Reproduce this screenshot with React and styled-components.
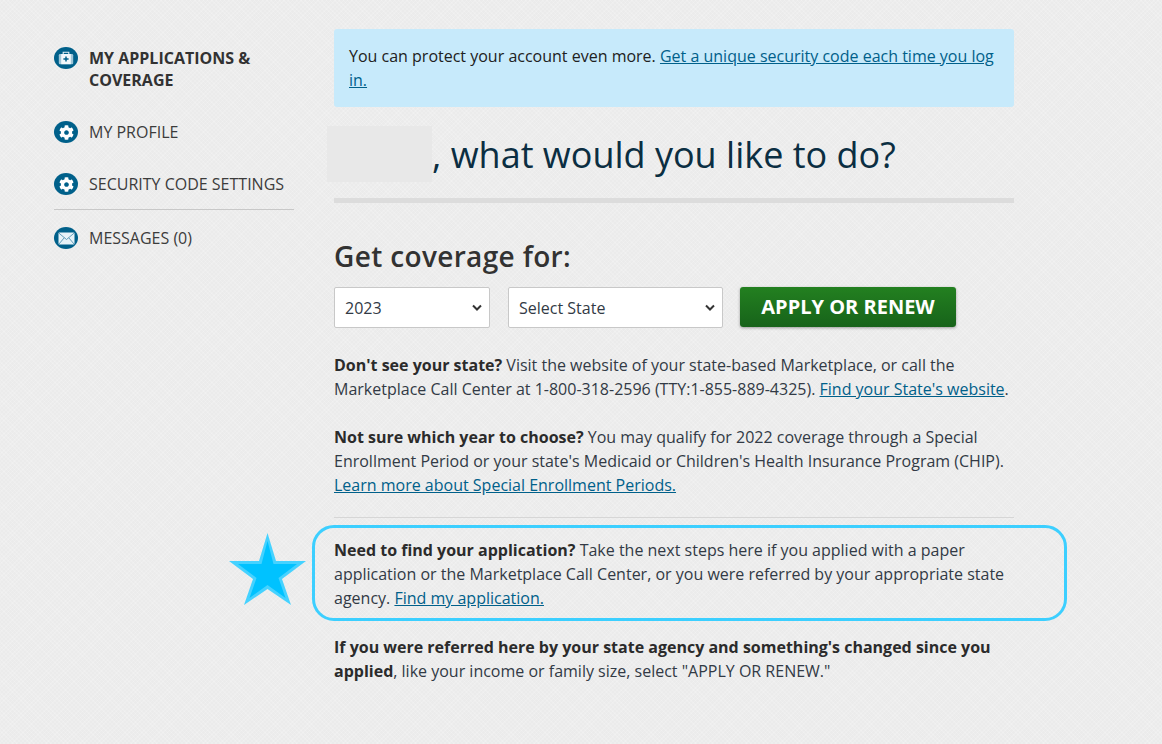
import styled, { createGlobalStyle } from "styled-components";
import { FaCog } from "react-icons/fa";

const GlobalStyle = createGlobalStyle`
  html, body {
    margin: 0;
    padding: 0;
  }
  body {
    font-family: "Open Sans", "Liberation Sans", sans-serif;
    font-size: 16px;
    line-height: 24px;
    color: #323a45;
    background-color: #ebebeb;
    background-image:
      repeating-linear-gradient(45deg, rgba(255, 255, 255, 0.16) 0 1px, transparent 1px 3px),
      repeating-linear-gradient(-45deg, rgba(255, 255, 255, 0.16) 0 1px, transparent 1px 3px);
  }
`;

const BriefcaseIcon = () => (
  <svg width="16" height="14" viewBox="0 0 16 14" fill="none">
    <path d="M5.2 3V1.200h5.600V3" stroke="#e4f1f7" strokeWidth="1.100" />
    <rect x="0.800" y="3" width="14.400" height="10.200" rx="1.200" fill="#9fc6d8" />
    <rect x="3.200" y="3" width="9.600" height="10.200" fill="#f2f8fb" />
    <path d="M8 5.400v5.200M5.400 8h5.200" stroke="#00608a" strokeWidth="1.500" />
  </svg>
);

const EnvelopeIcon = () => (
  <svg width="17" height="13" viewBox="0 0 17 13">
    <rect x="0.500" y="0.500" width="16" height="12" rx="1" fill="#e6f2f8" />
    <path d="M1 1.200L8.500 7.500 16 1.200M1 12l5.200-6.200M16 12l-5.200-6.200" fill="none" stroke="#3f87a8" strokeWidth="0.800" />
  </svg>
);

const navItems = [
  { label: "MY APPLICATIONS & COVERAGE", icon: <BriefcaseIcon />, active: true },
  { label: "MY PROFILE", icon: <FaCog size={15} color="#fff" /> },
  { label: "SECURITY CODE SETTINGS", icon: <FaCog size={15} color="#fff" />, divided: true },
  { label: "MESSAGES (0)", icon: <EnvelopeIcon /> },
];

export default function App() {
  return (
    <>
      <GlobalStyle />
      <Page>
        <Sidebar>
          {navItems.map((item) => (
            <NavItem key={item.label} $divided={item.divided}>
              <IconCircle>{item.icon}</IconCircle>
              <NavLabel $active={item.active}>{item.label}</NavLabel>
            </NavItem>
          ))}
        </Sidebar>

        <Main>
          <Alert>
            You can protect your account even more.{" "}
            <AlertLink href="#">Get a unique security code each time you log in.</AlertLink>
          </Alert>

          <Heading>
            <Redacted />
            <HeadingText>, what would you like to do?</HeadingText>
          </Heading>

          <Subheading>Get coverage for:</Subheading>
          <Controls>
            <Select $width={156} defaultValue="2023">
              <option>2023</option>
              <option>2022</option>
            </Select>
            <Select $width={215} defaultValue="Select State">
              <option>Select State</option>
            </Select>
            <ApplyButton>APPLY OR RENEW</ApplyButton>
          </Controls>

          <Paragraph>
            <strong>Don't see your state?</strong> Visit the website of your state-based Marketplace, or call the
            Marketplace Call Center at 1-800-318-2596 (TTY:1-855-889-4325).{" "}
            <TextLink href="#">Find your State's website</TextLink>.
          </Paragraph>

          <Paragraph>
            <strong>Not sure which year to choose?</strong> You may qualify for 2022 coverage through a Special
            Enrollment Period or your state's Medicaid or Children's Health Insurance Program (CHIP).{" "}
            <TextLink href="#">Learn more about Special Enrollment Periods.</TextLink>
          </Paragraph>

          <Divider />

          <Callout>
            <Star viewBox="0 0 77 72">
              <path d="M38.500 0L47 28h30L53 46l9 26-23.500-16L15 72l9-26L0 28h30z" fill="#45d2ff" />
              <path d="M38.500 8l6 23H68L49.500 45l7 20-18-13-18 13 7-20L9 31h23.500z" fill="#00c2ff" />
            </Star>
            <Ring />
            <Paragraph>
              <strong>Need to find your application?</strong> Take the next steps here if you applied with a paper
              application or the Marketplace Call Center, or you were referred by your appropriate state agency.{" "}
              <TextLink href="#">Find my application.</TextLink>
            </Paragraph>
          </Callout>

          <Paragraph>
            <strong>If you were referred here by your state agency and something's changed since you applied</strong>,
            like your income or family size, select "APPLY OR RENEW."
          </Paragraph>
        </Main>
      </Page>
    </>
  );
}

const Page = styled.div`
  display: flex;
  gap: 40px;
  padding: 29px 0 0 54px;
  height: 715px;
  overflow: hidden;
`;

const Sidebar = styled.nav`
  width: 240px;
  flex: none;
  padding-top: 18px;
`;

const NavItem = styled.div`
  display: flex;
  gap: 11px;
  align-items: flex-start;
  margin-bottom: ${(p) => (p.$divided ? "17px" : "30px")};
  padding-bottom: ${(p) => (p.$divided ? "14px" : "0")};
  border-bottom: ${(p) => (p.$divided ? "1px solid #c8c8c8" : "none")};
`;

const IconCircle = styled.span`
  flex: none;
  width: 24px;
  height: 22px;
  border-radius: 50%;
  background: #00608a;
  display: flex;
  align-items: center;
  justify-content: center;
`;

const NavLabel = styled.span`
  font-size: 16px;
  line-height: 22px;
  font-weight: ${(p) => (p.$active ? 700 : 400)};
  color: ${(p) => (p.$active ? "#323232" : "#3c3c3c")};
`;

const Main = styled.main`
  width: 680px;
  flex: none;
`;

const Alert = styled.div`
  background: #c7eafb;
  border-radius: 3px;
  padding: 15px;
  height: 78px;
  box-sizing: border-box;
  color: #212121;
`;

const AlertLink = styled.a`
  color: #00608a;
`;

const Heading = styled.h1`
  display: flex;
  align-items: center;
  margin: 19px 0 0;
  height: 56px;
  font-size: 36px;
  line-height: 56px;
  font-weight: 400;
  color: #0b2e42;
  white-space: pre-wrap;
`;

const HeadingText = styled.span`
  padding-top: 2px;
`;

const Redacted = styled.span`
  display: block;
  width: 105px;
  height: 56px;
  margin-left: -7px;
  background: #e8e8e8;
`;

const Subheading = styled.h2`
  margin: 16px 0 0;
  padding-top: 35px;
  border-top: 5px solid #dcdcdc;
  font-size: 28px;
  line-height: 36px;
  font-weight: 600;
  letter-spacing: 0.35px;
  color: #323232;
`;

const Controls = styled.div`
  display: flex;
  align-items: flex-start;
  gap: 18px;
  margin-top: 13px;
`;

const Select = styled.select`
  appearance: none;
  width: ${(p) => p.$width}px;
  height: 41px;
  padding: 0 10px;
  font-family: inherit;
  font-size: 16px;
  color: #323a45;
  border: 1px solid #c8c8c8;
  border-radius: 2px;
  background-color: #fff;
  background-image: url("data:image/svg+xml,%3Csvg xmlns='http://www.w3.org/2000/svg' width='10' height='7'%3E%3Cpath d='M1 1.500l4 4 4-4' fill='none' stroke='%23333' stroke-width='2'/%3E%3C/svg%3E");
  background-repeat: no-repeat;
  background-position: right 7px center;
`;

const ApplyButton = styled.button`
  width: 216px;
  height: 40px;
  margin-left: -1px;
  padding: 0 0 2px;
  border: none;
  border-radius: 3px;
  background: linear-gradient(#238020, #17631a);
  box-shadow: 0 1px 3px rgba(0, 0, 0, 0.35);
  color: #fff;
  font-family: inherit;
  font-size: 20px;
  font-weight: 700;
`;

const Paragraph = styled.p`
  margin: 0;
  padding-top: 24px;
  color: #323a45;
  strong {
    color: #2b2b2b;
  }
  ${Controls} + & {
    padding-top: 25px;
  }
`;

const TextLink = styled.a`
  color: #00608a;
`;

const Divider = styled.hr`
  margin: 20px 0 0;
  border: none;
  border-top: 1px solid #d6d6d6;
`;

const Callout = styled.div`
  position: relative;
  margin-top: -4px;
  padding-bottom: 1px;
`;

const Ring = styled.div`
  position: absolute;
  left: -22px;
  right: -53px;
  top: 11px;
  height: 96px;
  border: 3px solid #3ccfff;
  border-radius: 22px;
  box-sizing: border-box;
`;

const Star = styled.svg`
  position: absolute;
  left: -105px;
  top: 19px;
  width: 77px;
  height: 72px;
`;
